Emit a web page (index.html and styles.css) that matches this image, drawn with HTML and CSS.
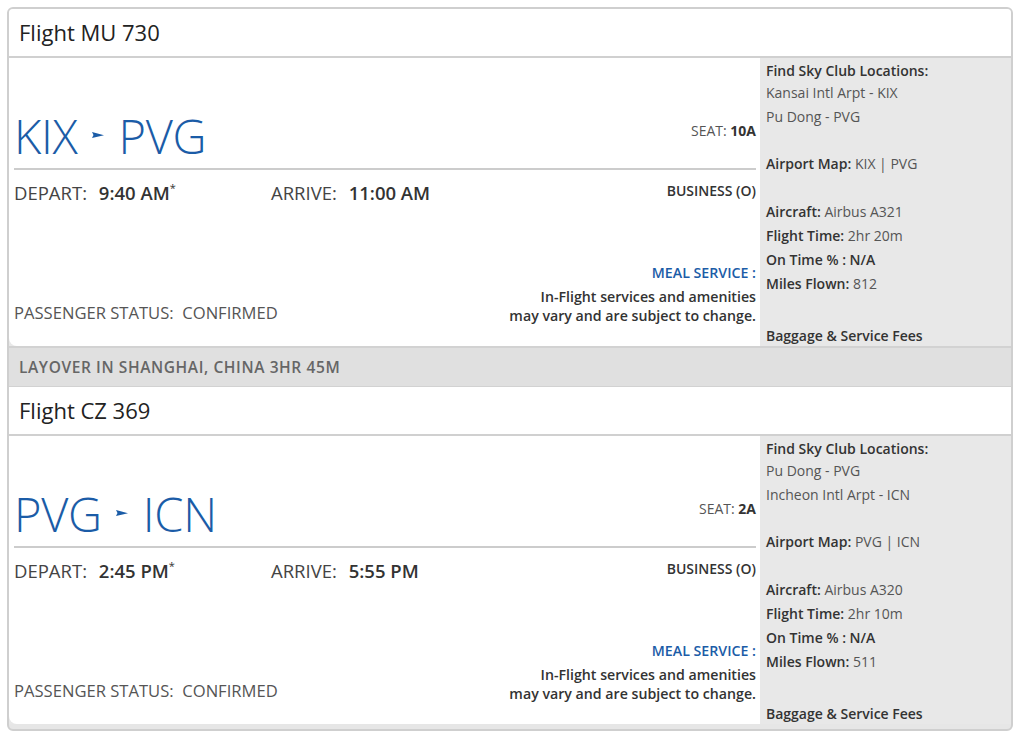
FILE: index.html
```html
<!DOCTYPE html>
<html>
<head>
<meta charset="utf-8">
<link rel="stylesheet" href="styles.css">
</head>
<body>
<div class="itinerary">
  <div class="flight-head">Flight MU 730</div>
  <div class="flight-body">
    <div class="main">
      <div class="route-row">
        <div class="route">KIX<svg class="arrow" width="12" height="6" viewBox="0 0 12 6"><polygon points="0,0 12,3.2 0,6 1.5,3" fill="#1b5ca7"/></svg>PVG</div>
        <div class="seat">SEAT: <b>10A</b></div>
      </div>
      <div class="times-row">
        <div class="time"><span class="lbl">DEPART:</span> <span class="val">9:40 AM<sup>*</sup></span></div>
        <div class="time"><span class="lbl">ARRIVE:</span> <span class="val">11:00 AM</span></div>
        <div class="cabin">BUSINESS (O)</div>
      </div>
      <div class="bottom-row">
        <div class="status">PASSENGER STATUS:&nbsp; CONFIRMED</div>
        <div class="meal">
          <div class="meal-title">MEAL SERVICE :</div>
          <div class="meal-text">In-Flight services and amenities<br>may vary and are subject to change.</div>
        </div>
      </div>
    </div>
    <div class="side">
      <div class="side-h">Find Sky Club Locations:</div>
      <div class="side-v">Kansai Intl Arpt - KIX</div>
      <div class="side-v">Pu Dong - PVG</div>
      <div class="side-l gap"><b>Airport Map:</b> KIX | PVG</div>
      <div class="side-l gap"><b>Aircraft:</b> Airbus A321</div>
      <div class="side-l"><b>Flight Time:</b> 2hr 20m</div>
      <div class="side-l"><b>On Time % : N/A</b></div>
      <div class="side-l"><b>Miles Flown:</b> 812</div>
      <div class="side-b">Baggage &amp; Service Fees</div>
    </div>
  </div>
  <div class="layover">LAYOVER IN SHANGHAI, CHINA 3HR 45M</div>
  <div class="flight-head">Flight CZ 369</div>
  <div class="flight-body">
    <div class="main">
      <div class="route-row">
        <div class="route">PVG<svg class="arrow" width="12" height="6" viewBox="0 0 12 6"><polygon points="0,0 12,3.2 0,6 1.5,3" fill="#1b5ca7"/></svg>ICN</div>
        <div class="seat">SEAT: <b>2A</b></div>
      </div>
      <div class="times-row">
        <div class="time"><span class="lbl">DEPART:</span> <span class="val">2:45 PM<sup>*</sup></span></div>
        <div class="time"><span class="lbl">ARRIVE:</span> <span class="val">5:55 PM</span></div>
        <div class="cabin">BUSINESS (O)</div>
      </div>
      <div class="bottom-row">
        <div class="status">PASSENGER STATUS:&nbsp; CONFIRMED</div>
        <div class="meal">
          <div class="meal-title">MEAL SERVICE :</div>
          <div class="meal-text">In-Flight services and amenities<br>may vary and are subject to change.</div>
        </div>
      </div>
    </div>
    <div class="side">
      <div class="side-h">Find Sky Club Locations:</div>
      <div class="side-v">Pu Dong - PVG</div>
      <div class="side-v">Incheon Intl Arpt - ICN</div>
      <div class="side-l gap"><b>Airport Map:</b> PVG | ICN</div>
      <div class="side-l gap"><b>Aircraft:</b> Airbus A320</div>
      <div class="side-l"><b>Flight Time:</b> 2hr 10m</div>
      <div class="side-l"><b>On Time % : N/A</b></div>
      <div class="side-l"><b>Miles Flown:</b> 511</div>
      <div class="side-b">Baggage &amp; Service Fees</div>
    </div>
  </div>
</div>
</body>
</html>
```
FILE: styles.css
```css
html, body {
  margin: 0;
  padding: 0;
  background: #fff;
}
body {
  font-family: "Open Sans", "DejaVu Sans", sans-serif;
  color: #333;
  padding: 7px 11px 0 7px;
}
.itinerary {
  border: 2px solid #cfcfcf;
  border-radius: 6px;
  background: #e6e6e6;
  padding-bottom: 5px;
  overflow: hidden;
}
.flight-head {
  background: #fff;
  height: 47px;
  line-height: 47px;
  padding-left: 10px;
  font-size: 22px;
  color: #222;
  border-bottom: 2px solid #d0d0d0;
}
.flight-body {
  display: flex;
  background: #e8e8e8;
}
.main {
  flex: 1;
  background: #fff;
  border-bottom-left-radius: 8px;
  display: flex;
  flex-direction: column;
  padding: 0 4px 21px 5px;
}
.route-row {
  display: flex;
  justify-content: space-between;
  margin-top: 50px;
  padding-bottom: 4px;
  border-bottom: 2px solid #cccccc;
}
.route {
  font-size: 47px;
  line-height: 56px;
  font-weight: 300;
  color: #1b5ca7;
  white-space: nowrap;
  letter-spacing: -0.3px;
}
.arrow {
  vertical-align: middle;
  margin: 0 15px 0 14px;
  position: relative;
  top: -6px;
}
.seat {
  font-size: 14px;
  line-height: 20px;
  margin-top: 13px;
  color: #555;
}
.seat b {
  font-weight: 700;
  color: #333;
}
.times-row {
  display: grid;
  grid-template-columns: 257px 1fr auto;
  margin-top: 11px;
  align-items: start;
}
.time {
  font-size: 18.5px;
  line-height: 24px;
  white-space: nowrap;
}
.lbl {
  color: #444;
  margin-right: 7px;
}
.val {
  font-weight: 600;
  color: #333;
}
.val sup {
  font-size: 11px;
  font-weight: 400;
  vertical-align: top;
  line-height: 14px;
}
.cabin {
  font-size: 14px;
  line-height: 20px;
  font-weight: 600;
  color: #333;
}
.bottom-row {
  margin-top: auto;
  display: flex;
  justify-content: space-between;
  align-items: flex-end;
}
.status {
  font-size: 16.6px;
  line-height: 24px;
  color: #555;
  white-space: nowrap;
}
.meal {
  text-align: right;
  font-size: 14.2px;
}
.meal-title {
  color: #1b5ca7;
  font-weight: 600;
  line-height: 20px;
  margin-bottom: 4px;
}
.meal-text {
  font-weight: 600;
  line-height: 19px;
  color: #333;
}
.side {
  width: 245px;
  padding: 3px 0 0 6px;
  font-size: 14px;
  color: #555;
}
.side b {
  font-weight: 600;
  color: #333;
}
.side-h {
  font-weight: 600;
  color: #333;
  line-height: 20px;
}
.side-v, .side-l {
  line-height: 24px;
}
.gap {
  margin-top: 23px;
}
.side-l.gap + .side-l.gap {
  margin-top: 24px;
}
.side-b {
  font-weight: 600;
  color: #333;
  line-height: 20px;
  margin-top: 30px;
}
.layover {
  background: #e0e0e0;
  border-top: 2px solid #d2d2d2;
  border-bottom: 1px solid #d2d2d2;
  height: 38px;
  line-height: 39px;
  padding-left: 10px;
  font-size: 15.5px;
  letter-spacing: 0.6px;
  font-weight: 600;
  color: #666;
}
```
